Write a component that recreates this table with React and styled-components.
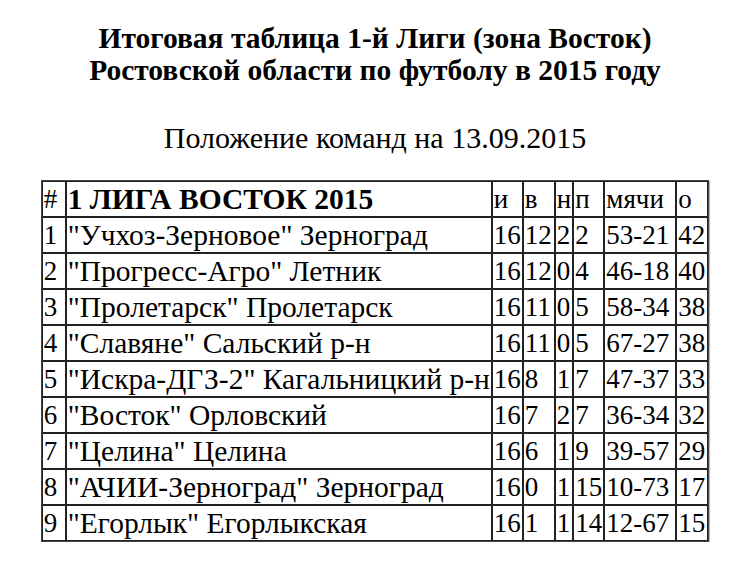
import styled, { createGlobalStyle } from "styled-components";

const Global = createGlobalStyle`
  html, body { margin: 0; padding: 0; background: #fff; }
  body { font-family: "Liberation Serif", serif; color: #000; }
`;

const Page = styled.div`
  display: flex;
  flex-direction: column;
  align-items: center;
  padding-top: 22px;
`;

const Title = styled.div`
  font-family: "Liberation Serif", serif;
  font-size: 29.5px;
  font-weight: bold;
  line-height: 32px;
  text-align: center;
`;

const Subtitle = styled.div`
  margin-top: 35px;
  font-family: "Liberation Serif", serif;
  font-size: 30px;
  line-height: 34px;
  text-align: center;
`;

const Table = styled.table`
  margin-top: 25px;
  border: 1px solid #444;
  border-collapse: separate;
  border-spacing: 0;
  font-family: "Liberation Serif", serif;
  box-shadow: 1px 1px 1px #bbb;
`;

const Cell = styled.td`
  border: 1px solid #222;
  padding: 0 1px;
  height: 34px;
  line-height: 30px;
  text-align: left;
  white-space: nowrap;
  font-family: "Liberation Serif", serif;
  font-size: ${p => (p.$wide ? 29.5 : 27)}px;
  font-weight: ${p => (p.$bold ? "bold" : "normal")};
  width: ${p => p.$w}px;
`;

const widths = [20, 421, 27, 28, 14, 27, 68, 28];

const rows = [
  ["1", "\"Учхоз-Зерновое\" Зерноград", "16", "12", "2", "2", "53-21", "42"],
  ["2", "\"Прогресс-Агро\" Летник", "16", "12", "0", "4", "46-18", "40"],
  ["3", "\"Пролетарск\" Пролетарск", "16", "11", "0", "5", "58-34", "38"],
  ["4", "\"Славяне\" Сальский р-н", "16", "11", "0", "5", "67-27", "38"],
  ["5", "\"Искра-ДГЗ-2\" Кагальницкий р-н", "16", "8", "1", "7", "47-37", "33"],
  ["6", "\"Восток\" Орловский", "16", "7", "2", "7", "36-34", "32"],
  ["7", "\"Целина\" Целина", "16", "6", "1", "9", "39-57", "29"],
  ["8", "\"АЧИИ-Зерноград\" Зерноград", "16", "0", "1", "15", "10-73", "17"],
  ["9", "\"Егорлык\" Егорлыкская", "16", "1", "1", "14", "12-67", "15"],
];

const head = ["#", "1 ЛИГА ВОСТОК 2015", "и", "в", "н", "п", "мячи", "о"];

export default function App() {
  return (
    <>
      <Global />
      <Page>
        <Title>
          Итоговая таблица 1-й Лиги (зона Восток)
          <br />
          Ростовской области по футболу в 2015 году
        </Title>
        <Subtitle>Положение команд на 13.09.2015</Subtitle>
        <Table>
          <tbody>
            <tr>
              {head.map((h, i) => (
                <Cell key={i} $w={widths[i]} $wide={i === 1} $bold={i === 1}>{h}</Cell>
              ))}
            </tr>
            {rows.map((r, i) => (
              <tr key={i}>
                {r.map((c, j) => (
                  <Cell key={j} $w={widths[j]} $wide={j === 1}>{c}</Cell>
                ))}
              </tr>
            ))}
          </tbody>
        </Table>
      </Page>
    </>
  );
}
